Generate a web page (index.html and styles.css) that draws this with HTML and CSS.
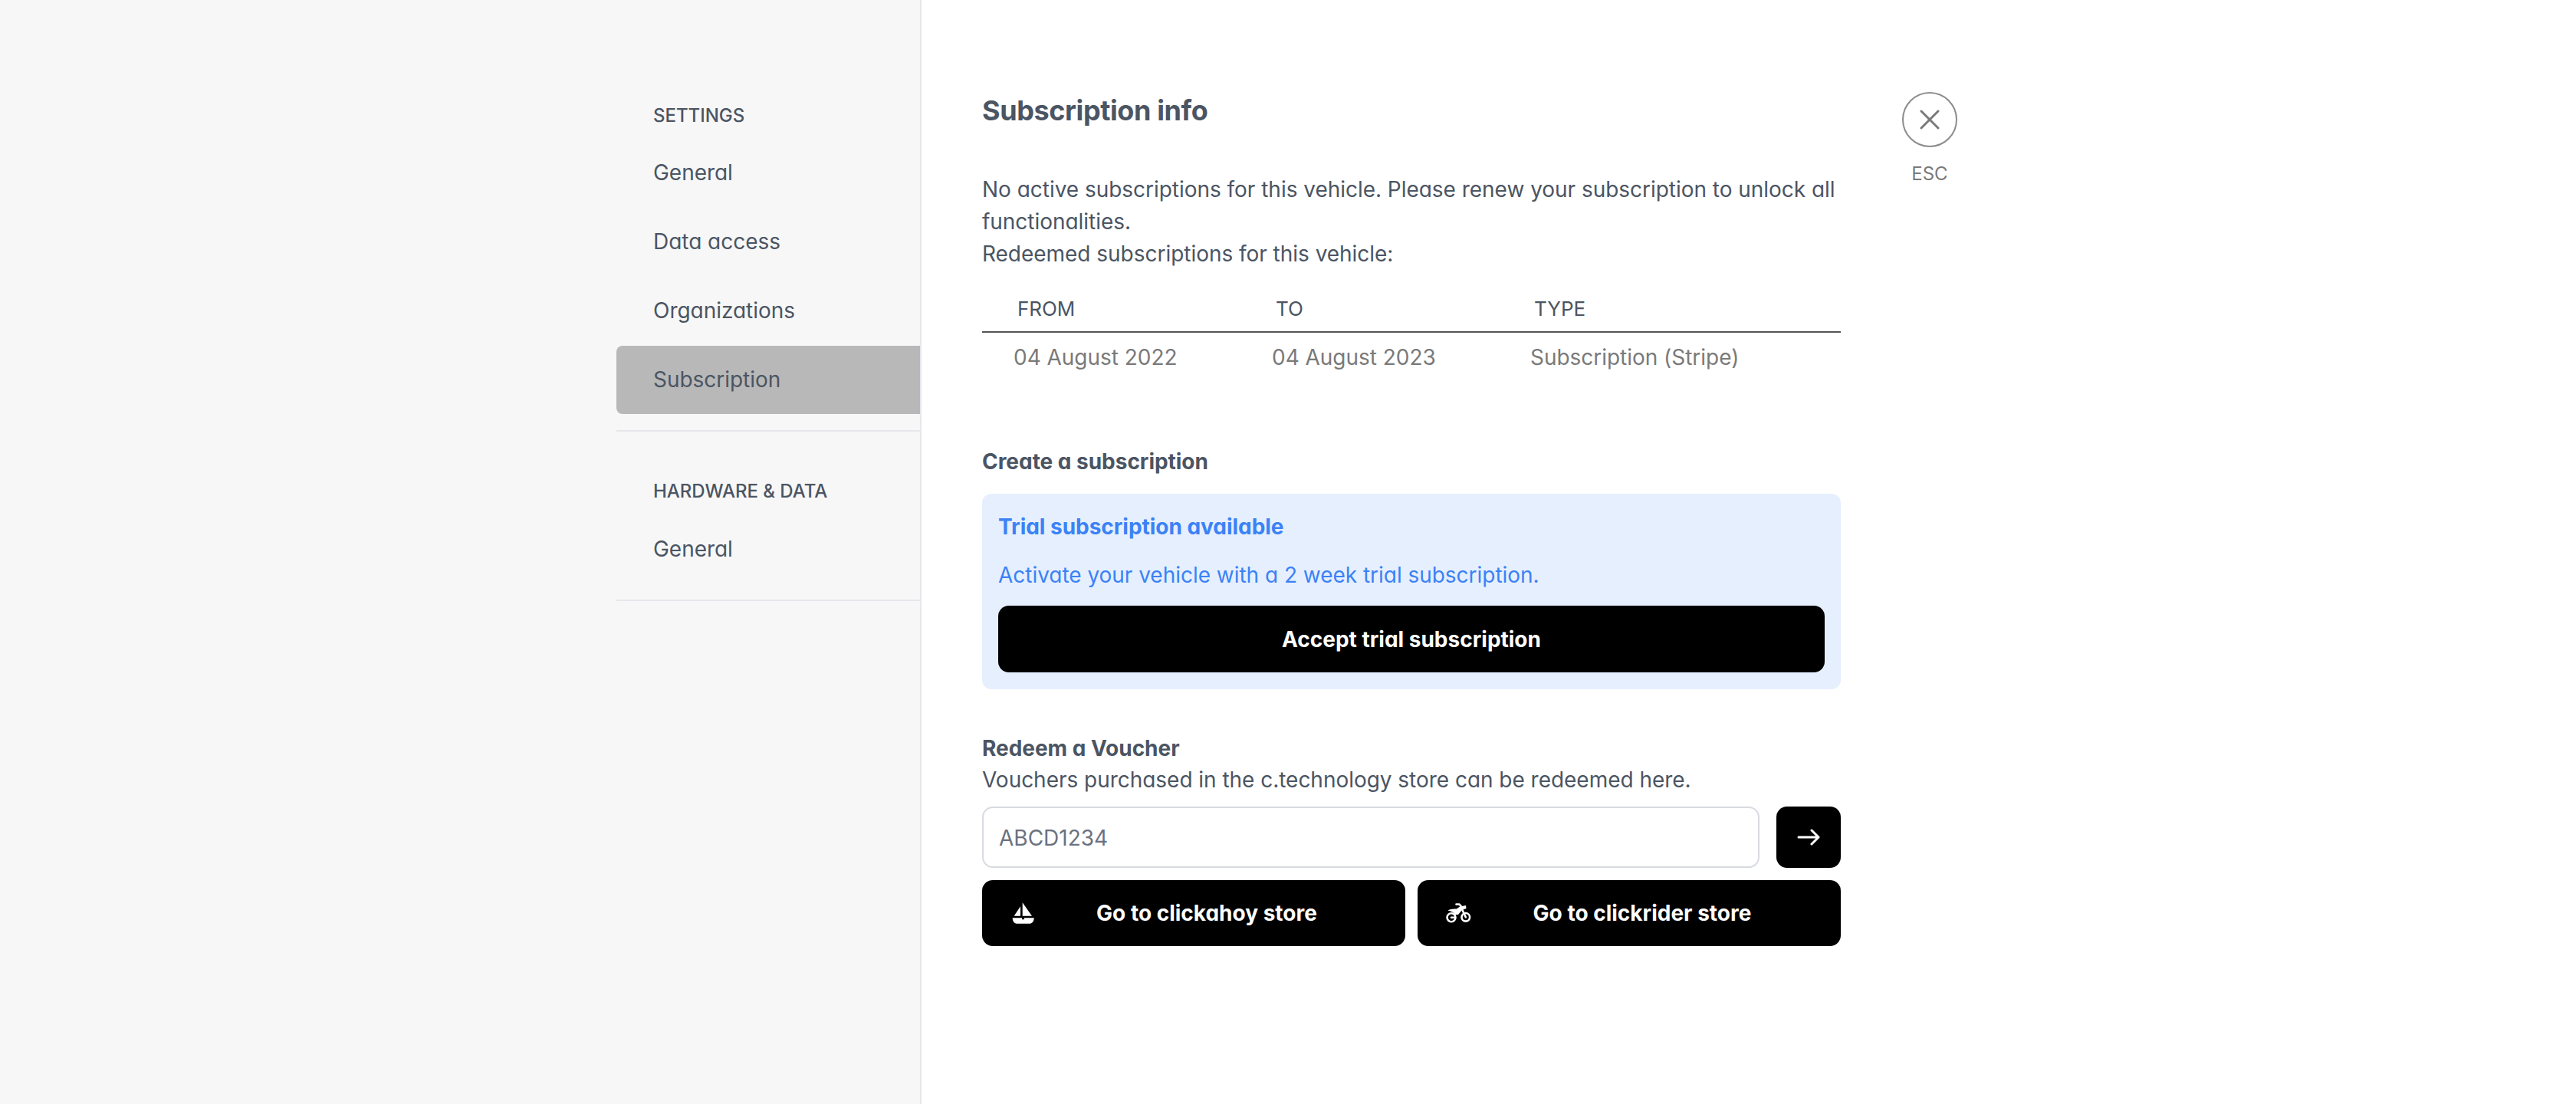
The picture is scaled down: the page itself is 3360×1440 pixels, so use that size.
FILE: index.html
```html
<!DOCTYPE html>
<html lang="en">
<head>
    <meta charset="UTF-8">
    <meta name="viewport" content="width=device-width, initial-scale=1.0">
    <title>Subscription info</title>
    <link rel="stylesheet" href="styles.css">
</head>
<body>
<div class="sidebar">
    <div class="nav-section first">
        <div class="nav-heading">SETTINGS</div>
        <a class="nav-item">General</a>
        <a class="nav-item">Data access</a>
        <a class="nav-item">Organizations</a>
        <a class="nav-item active">Subscription</a>
    </div>
    <div class="nav-section">
        <div class="nav-heading">HARDWARE &amp; DATA</div>
        <a class="nav-item">General</a>
    </div>
</div>

<div class="content">
    <h2>Subscription info</h2>
    <p class="info">No active subscriptions for this vehicle. Please renew your subscription to unlock all functionalities.<br>Redeemed subscriptions for this vehicle:</p>

    <div class="table-row table-head">
        <div>FROM</div>
        <div>TO</div>
        <div>TYPE</div>
    </div>
    <div class="table-row table-data">
        <div>04 August 2022</div>
        <div>04 August 2023</div>
        <div>Subscription (Stripe)</div>
    </div>

    <h3 class="create-title">Create a subscription</h3>
    <div class="alert">
        <div class="alert-title">Trial subscription available</div>
        <div class="alert-text">Activate your vehicle with a 2 week trial subscription.</div>
        <button class="btn btn-trial">Accept trial subscription</button>
    </div>

    <h3 class="redeem-title">Redeem a Voucher</h3>
    <p class="redeem-text">Vouchers purchased in the c.technology store can be redeemed here.</p>
    <div class="voucher-row">
        <input class="voucher-input" type="text" placeholder="ABCD1234">
        <button class="btn btn-go" aria-label="Redeem">
            <svg width="30" height="24" viewBox="0 0 30 24" fill="none" stroke="#fff" stroke-width="3" stroke-linecap="round" stroke-linejoin="round"><path d="M2 12h26M19 3l9 9-9 9"/></svg>
        </button>
    </div>
    <div class="store-row">
        <button class="btn btn-store">
            <span class="store-icon">
                <svg width="30" height="28" viewBox="0 0 30 28" fill="#fff"><path d="M11 5.300L2.700 17.700H11z"/><path d="M13.700 .3L26 17.700H13.700z"/><path d="M.7 20.300H13v2h3v-2h12.700c0 4-2 7.400-5.500 7.400H6.200C2.700 27.700 .7 24.300 .7 20.300z"/></svg>
            </span>
            <span class="store-label">Go to clickahoy store</span>
        </button>
        <button class="btn btn-store">
            <span class="store-icon bike-icon">
                <svg width="34" height="26" viewBox="0 0 34 26" fill="none" stroke="#fff" stroke-width="2.600" stroke-linecap="round" stroke-linejoin="round"><circle cx="7" cy="18.700" r="5.500"/><path d="M7 18.700h4"/><circle cx="25.800" cy="18.300" r="5.300"/><path d="M13.500 1.500h4l3.500 4"/><path d="M20.500 7l5.300 11.300"/><path d="M2.500 9.500Q6 7 14 7.500l4-3 8-1.500.5 4-5.500 2-5 6h-4Q10 11 2.500 9.500z" fill="#fff" stroke="none"/></svg>
            </span>
            <span class="store-label">Go to clickrider store</span>
        </button>
    </div>
</div>

<div class="close-col">
    <button class="close-btn" aria-label="Close">
        <svg width="26" height="26" viewBox="0 0 26 26" fill="none" stroke="#7a7a7a" stroke-width="3" stroke-linecap="round"><path d="M2 2l22 22M24 2L2 24"/></svg>
    </button>
    <div class="close-label">ESC</div>
</div>
</body>
</html>
```

FILE: styles.css
```css
* {
    box-sizing: border-box;
}

html, body {
    margin: 0;
    height: 100%;
}

body {
    display: flex;
    font-family: Inter, "Liberation Sans", sans-serif;
    font-feature-settings: "cv11" 1;
    font-size: 28px;
    line-height: 42px;
    letter-spacing: -0.03px;
    color: #4b5563;
    background: white;
}

.sidebar {
    width: 1202px;
    padding-left: 804px;
    background-color: #f7f7f7;
    border-right: 2px solid #e5e7eb;
}

.nav-section {
    padding-top: 48px;
    padding-bottom: 21px;
    border-bottom: 2px solid #e5e7eb;
}

.nav-section.first {
    padding-top: 120px;
    padding-bottom: 21px;
}

.nav-heading {
    padding-left: 48px;
    font-size: 24px;
    font-weight: 500;
    line-height: 60px;
}

.first .nav-heading {
    padding-top: 2px;
    line-height: 58px;
}

.nav-item {
    display: block;
    height: 90px;
    padding-left: 48px;
    line-height: 90px;
}

.nav-item.active {
    height: 89px;
    margin-top: 1px;
    background-color: #b8b8b8;
    border-radius: 8px 0 0 8px;
    line-height: 88px;
}

.content {
    width: 1199px;
    padding: 120px 0 0 79px;
}

h2 {
    margin: 0;
    font-size: 36px;
    font-weight: 700;
    line-height: 48px;
    letter-spacing: -0.4px;
}

h3 {
    margin: 0;
    font-size: 28px;
    font-weight: 700;
}

p {
    margin: 0;
}

.info {
    margin-top: 58px;
}

.table-row {
    display: grid;
    grid-template-columns: 337px 337px 1fr;
}

.table-head {
    margin-top: 30px;
    padding: 0 0 8px 46px;
    border-bottom: 2px solid #555;
    font-size: 26px;
}

.table-data {
    padding: 11px 0 0 41px;
    color: #7a7a7a;
}

.create-title {
    margin-top: 94px;
}

.alert {
    margin-top: 21px;
    padding: 22px 21px;
    background-color: #e6effe;
    border-radius: 12px;
    color: #3b82f6;
}

.alert-title {
    font-weight: 700;
}

.alert-text {
    margin-top: 21px;
}

.btn {
    display: flex;
    align-items: center;
    justify-content: center;
    background-color: black;
    color: white;
    border: none;
    border-radius: 14px;
    font-family: inherit;
    font-feature-settings: inherit;
    font-size: 28px;
    font-weight: 700;
    cursor: pointer;
}

.btn-trial {
    width: 100%;
    height: 87px;
    margin-top: 19px;
}

.redeem-title {
    margin-top: 57px;
    line-height: 40px;
}

.voucher-row {
    display: flex;
    gap: 22px;
    margin-top: 14px;
}

.voucher-input {
    flex: 1;
    height: 80px;
    padding: 2px 20px 0;
    border: 2px solid #d8dbe0;
    border-radius: 14px;
    font-family: inherit;
    font-feature-settings: inherit;
    font-size: 28px;
    color: #4b5563;
}

.voucher-input::placeholder {
    color: #6b7280;
}

.btn-go {
    width: 84px;
    height: 80px;
}

.store-row {
    display: flex;
    gap: 16px;
    margin-top: 16px;
}

.btn-store {
    flex: 1;
    height: 86px;
    padding: 0 39px;
}

.store-icon {
    display: flex;
    width: 34px;
}

.bike-icon svg {
    margin-left: -2px;
}

.store-label {
    flex: 1;
    text-align: center;
}

.close-col {
    display: flex;
    flex-direction: column;
    align-items: center;
    width: 72px;
    margin-left: 80px;
    padding-top: 120px;
}

.close-btn {
    display: flex;
    align-items: center;
    justify-content: center;
    width: 72px;
    height: 72px;
    padding: 0;
    background: white;
    border: 2px solid #8c8c8c;
    border-radius: 50%;
    cursor: pointer;
}

.close-label {
    margin-top: 17px;
    font-size: 24px;
    line-height: 36px;
    color: #7a7a7a;
}
```
